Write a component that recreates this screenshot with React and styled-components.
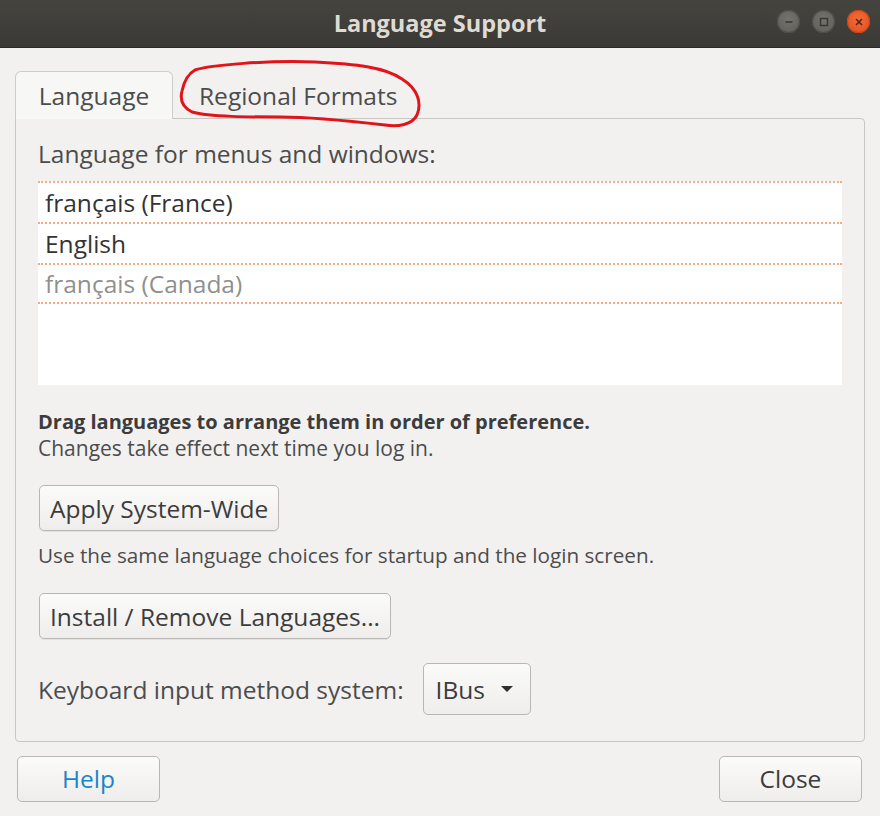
import React from 'react';
import styled, { createGlobalStyle } from 'styled-components';

const GlobalStyle = createGlobalStyle`
    html, body {
        margin: 0;
        padding: 0;
        background: #f2f1f0;
    }
    body {
        font-family: "Open Sans", "Noto Sans", sans-serif;
        color: #3c3c3c;
    }
`;

const languages = [
    { name: 'français (France)', muted: false },
    { name: 'English', muted: false },
    { name: 'français (Canada)', muted: true },
];

function TitleBar() {
    return (
        <StyledTitleBar>
            <Title>Language Support</Title>
            <WindowButtons>
                <WindowButton>
                    <svg width="12" height="12" viewBox="0 0 12 12">
                        <path d="M2.5 6h7" stroke="#3a3935" strokeWidth="1.6" />
                    </svg>
                </WindowButton>
                <WindowButton>
                    <svg width="12" height="12" viewBox="0 0 12 12">
                        <rect x="2.5" y="2.5" width="7" height="7" fill="none" stroke="#3a3935" strokeWidth="1.5" />
                    </svg>
                </WindowButton>
                <WindowButton close>
                    <svg width="12" height="12" viewBox="0 0 12 12">
                        <path d="M3 3l6 6M9 3l-6 6" stroke="#4a2a1e" strokeWidth="1.6" />
                    </svg>
                </WindowButton>
            </WindowButtons>
        </StyledTitleBar>
    );
}

function App() {
    return (
        <Window>
            <GlobalStyle />
            <TitleBar />
            <Content>
                <TabBar>
                    <Tab active>Language</Tab>
                    <Tab>Regional Formats</Tab>
                    {/* red hand-drawn mark around the second tab */}
                    <Annotation width="260" height="80" viewBox="0 0 260 80">
                        <path
                            d="M25 15 C40 10, 100 5, 145 7 C185 9, 215 12, 232 24 C248 34, 252 48, 247 60 C242 70, 228 72, 215 70 C180 66, 140 62, 111 62 C80 62, 40 62, 22 57 C12 52, 10 44, 12 36 C14 26, 18 19, 25 15 Z"
                            fill="none"
                            stroke="#e0141a"
                            strokeWidth="3"
                            strokeLinecap="round"
                        />
                    </Annotation>
                </TabBar>
                <Panel>
                    <Label>Language for menus and windows:</Label>
                    <LanguageList>
                        {languages.map((lang) => (
                            <LanguageRow key={lang.name} muted={lang.muted}>
                                {lang.name}
                            </LanguageRow>
                        ))}
                    </LanguageList>
                    <Hint>
                        <strong>Drag languages to arrange them in order of preference.</strong>
                        <div>Changes take effect next time you log in.</div>
                    </Hint>
                    <Button>Apply System-Wide</Button>
                    <Note>Use the same language choices for startup and the login screen.</Note>
                    <Button>Install / Remove Languages...</Button>
                    <InputRow>
                        <span>Keyboard input method system:</span>
                        <Combo>
                            IBus
                            <svg width="14" height="8" viewBox="0 0 14 8">
                                <path d="M1 1h12L7 7z" fill="#2e2e2e" />
                            </svg>
                        </Combo>
                    </InputRow>
                </Panel>
                <Footer>
                    <FooterButton help>Help</FooterButton>
                    <FooterButton>Close</FooterButton>
                </Footer>
            </Content>
        </Window>
    );
}

export default App;

const Window = styled.div`
    width: 880px;
    height: 816px;
    display: flex;
    flex-direction: column;
    background: #f2f1f0;
    overflow: hidden;
`;

const StyledTitleBar = styled.div`
    position: relative;
    height: 48px;
    flex: none;
    display: flex;
    align-items: center;
    justify-content: center;
    background: linear-gradient(#45443f, #3a3935);
    border-bottom: 1px solid #2b2a27;
    box-sizing: border-box;
`;

const Title = styled.div`
    color: #dfdbd2;
    font-weight: 700;
    font-size: 23.5px;
    margin-top: -2px;
`;

const WindowButtons = styled.div`
    position: absolute;
    right: 10px;
    top: 10px;
    display: flex;
    gap: 12px;
`;

const WindowButton = styled.div`
    width: 23px;
    height: 23px;
    border-radius: 50%;
    display: flex;
    align-items: center;
    justify-content: center;
    background: ${(p) => (p.close
        ? 'radial-gradient(circle at 50% 40%, #f26b3a, #e24c1a)'
        : 'radial-gradient(circle at 50% 40%, #75736c, #5c5b56)')};
    box-shadow: inset 0 0 0 1px ${(p) => (p.close ? '#c94519' : '#4e4d48')};
`;

const Content = styled.div`
    flex: 1;
    display: flex;
    flex-direction: column;
    padding: 23px 15px 0 15px;
`;

const TabBar = styled.div`
    position: relative;
    display: flex;
    align-items: flex-end;
    height: 47px;
    z-index: 1;
`;

const Tab = styled.div`
    box-sizing: border-box;
    height: ${(p) => (p.active ? '48px' : '46px')};
    width: ${(p) => (p.active ? '158px' : 'auto')};
    padding: 0 ${(p) => (p.active ? '0' : '25px')};
    display: flex;
    align-items: center;
    justify-content: center;
    font-size: 24.5px;
    color: #4c4c4c;
    background: ${(p) => (p.active ? '#f7f7f6' : 'transparent')};
    border: 1px solid ${(p) => (p.active ? '#cfcdca' : 'transparent')};
    border-bottom: none;
    border-radius: 6px 6px 0 0;
    margin-bottom: ${(p) => (p.active ? '-1px' : '0')};
`;

const Annotation = styled.svg`
    position: absolute;
    left: 155px;
    top: -16px;
    pointer-events: none;
`;

const Panel = styled.div`
    box-sizing: border-box;
    height: 624px;
    border: 1px solid #c9c7c4;
    border-radius: 0 4px 4px 4px;
    padding: 13px 22px 0 22px;
    display: flex;
    flex-direction: column;
    align-items: flex-start;
    font-size: 24.5px;
    color: #4c4c4c;
`;

const Label = styled.div`
    height: 42px;
    display: flex;
    align-items: center;
    margin-bottom: 7px;
`;

const LanguageList = styled.div`
    align-self: stretch;
    height: 204px;
    background: #ffffff;
    margin-bottom: 23px;
`;

const LanguageRow = styled.div`
    height: 41px;
    box-sizing: border-box;
    padding-left: 7px;
    display: flex;
    align-items: center;
    border-top: 2px dotted #f7a984;
    border-bottom: ${(p) => (p.muted ? '2px dotted #f7a984' : 'none')};
    color: ${(p) => (p.muted ? '#8f8f8f' : '#333333')};
`;

const Hint = styled.div`
    font-size: 21px;
    line-height: 26px;
    color: #4c4c4c;
    margin-bottom: 24px;

    strong {
        font-size: 20px;
        font-weight: 700;
        color: #3c3c3c;
    }
`;

const Button = styled.button`
    font-family: inherit;
    font-size: 24.5px;
    color: #3c3c3c;
    height: 46px;
    padding: 0 10px;
    margin-left: 1px;
    border: 1px solid #b9b7b3;
    border-radius: 5px;
    background: linear-gradient(#fbfbfa, #eeedeb);
    box-shadow: 0 1px 0 rgba(0, 0, 0, 0.06);
`;

const Note = styled.div`
    font-size: 20.7px;
    height: 48px;
    margin-bottom: 14px;
    display: flex;
    align-items: center;
`;

const InputRow = styled.div`
    margin-top: 24px;
    display: flex;
    align-items: center;
    gap: 19px;
`;

const Combo = styled.div`
    box-sizing: border-box;
    height: 52px;
    width: 108px;
    padding: 0 16px 0 12px;
    display: flex;
    align-items: center;
    justify-content: space-between;
    border: 1px solid #b9b7b3;
    border-radius: 5px;
    background: linear-gradient(#fbfbfa, #eeedeb);
    color: #3c3c3c;
`;

const Footer = styled.div`
    display: flex;
    justify-content: space-between;
    padding: 14px 3px 0 2px;
`;

const FooterButton = styled.button`
    font-family: inherit;
    font-size: 24.5px;
    width: 143px;
    height: 46px;
    padding-bottom: 3px;
    border: 1px solid #b9b7b3;
    border-radius: 5px;
    background: linear-gradient(#fbfbfa, #eeedeb);
    color: ${(p) => (p.help ? '#1a86c8' : '#3c3c3c')};
`;
